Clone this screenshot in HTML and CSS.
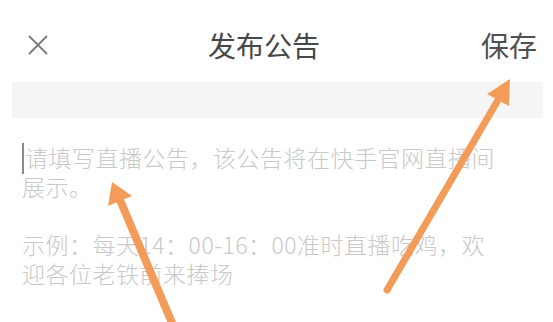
FILE: index.html
```html
<!DOCTYPE html>
<html lang="zh-CN">
<head>
<meta charset="utf-8">
<title>发布公告</title>
<link rel="stylesheet" href="styles.css">
</head>
<body>
<div class="page">
  <header class="topbar">
    <svg class="close" viewBox="0 0 20 20" width="20" height="20" aria-label="关闭">
      <path d="M1.5 1.5 L18.5 18.5 M18.5 1.5 L1.5 18.5" stroke="#7a7a7a" stroke-width="1.8" fill="none" stroke-linecap="round"/>
    </svg>
    <div class="title">发布公告</div>
    <div class="save">保存</div>
  </header>
  <div class="band"></div>
  <div class="editor">
    <div class="line"><span class="cursor"></span>请填写直播公告，该公告将在快手官网直播间</div>
    <div class="line">展示。</div>
    <div class="line blank"></div>
    <div class="line">示例：每天14：00-16：00准时直播吃鸡，欢</div>
    <div class="line">迎各位老铁前来捧场</div>
  </div>
  <svg class="arrows" viewBox="0 0 553 322" width="553" height="322">
    <line x1="175" y1="330" x2="120" y2="200" stroke="#f39c5a" stroke-width="8"/>
    <polygon points="112,182 108,206 132,196" fill="#f39c5a"/>
    <line x1="387" y1="290" x2="498" y2="100" stroke="#f39c5a" stroke-width="7" stroke-linecap="round"/>
    <polygon points="510,79 487,94 509,106" fill="#f39c5a"/>
  </svg>
</div>
</body>
</html>
```

FILE: styles.css
```css
html, body {
  margin: 0;
  padding: 0;
  background: #ffffff;
}
.page {
  position: relative;
  width: 553px;
  height: 322px;
  overflow: hidden;
  font-family: "Noto Sans CJK SC", "Noto Sans", sans-serif;
}
.topbar {
  box-sizing: border-box;
  height: 82px;
  padding: 8px 16px 0 28px;
  display: flex;
  align-items: center;
}
.close {
  display: block;
  flex: none;
}
.title {
  margin-left: 160px;
  font-size: 28px;
  line-height: 1;
  color: #474747;
}
.save {
  margin-left: auto;
  font-size: 28px;
  line-height: 1;
  color: #505050;
}
.band {
  height: 36px;
  margin: 0 10px 0 12px;
  background: #f5f5f5;
}
.editor {
  padding: 25px 0 0 22px;
  font-size: 23px;
  font-weight: 300;
  letter-spacing: 0.5px;
  line-height: 29px;
  color: #c9c9c9;
}
.line {
  white-space: nowrap;
  height: 29px;
}
.cursor {
  display: inline-block;
  width: 1.5px;
  height: 31px;
  margin-right: 1.5px;
  vertical-align: -7px;
  background: #8a8a8a;
}
.arrows {
  position: absolute;
  left: 0;
  top: 0;
  pointer-events: none;
}
```
